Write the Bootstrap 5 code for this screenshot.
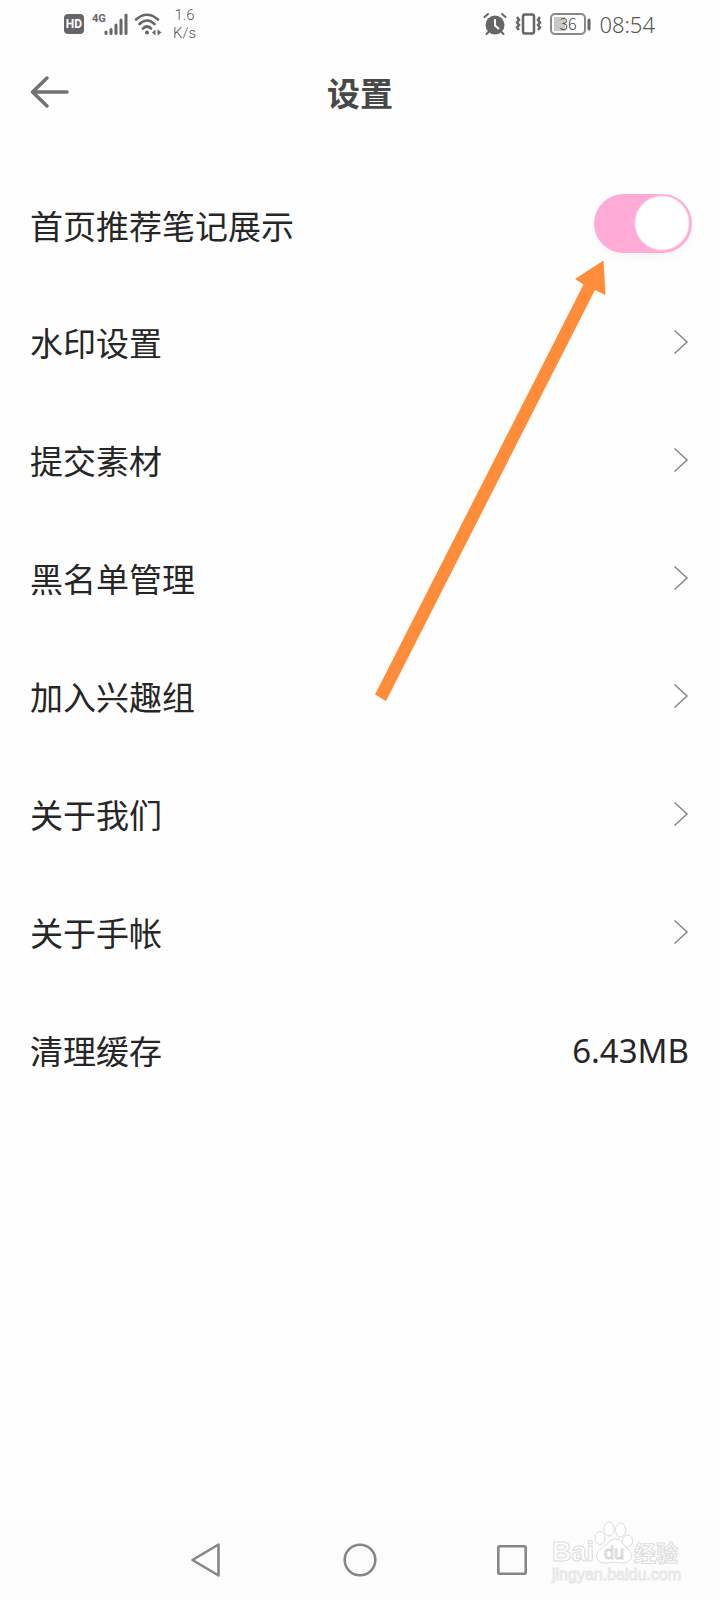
<!DOCTYPE html>
<html lang="zh-CN">
<head>
<meta charset="utf-8">
<meta name="viewport" content="width=device-width, initial-scale=1">
<title>设置</title>
<link rel="stylesheet" href="https://cdn.jsdelivr.net/npm/bootstrap@5.3.0/dist/css/bootstrap.min.css">
<style>
  body { font-family: "Noto Sans", "Noto Sans CJK SC", sans-serif; color: #262626; background: #fefefe; }
  .status-bar { height: 48px; padding: 0 65px 0 64px; color: #6a6a6a; }
  .net-speed { font: 300 15px/18px Roboto, "Noto Sans CJK SC", sans-serif; margin-left: 7px; color: #555; }
  .clock { font: 300 22px/30px "Noto Sans", "Noto Sans CJK SC", sans-serif; color: #555; }
  .title-bar { height: 88px; padding: 0 30px; margin-bottom: 28px; }
  .title-bar h1 { font: 700 33px/48px "Noto Sans CJK SC", sans-serif; color: #484848; }
  .side { width: 40px; }
  .setting-row { height: 118px; padding: 1px 31px 0 30px; font-family: "Noto Sans CJK SC", sans-serif; font-size: 33px; line-height: 48px; color: #262626; }
  .setting-row.with-switch { padding: 0 28px 0 30px; }
  .size-value { font-family: "Noto Sans", "Noto Sans CJK SC", sans-serif; padding-top: 2px; }
  .pink-switch { appearance: none; width: 98px; height: 59px; border-radius: 30px; background: radial-gradient(circle at 68px 29px, #fff 26px, #ffabd5 28px); box-shadow: 0 6px 12px -4px rgba(0,0,0,.06); }
  .pink-switch:not(:checked) { background: radial-gradient(circle at 30px 29px, #fff 26px, #ddd 28px); }
  .pointer-arrow { top: 96px; right: 112px; pointer-events: none; }
  .nav-keys { height: 80px; gap: 104px; background: #fcfcfc; }
  .nav-keys .btn { width: 48px; height: 48px; }
  .watermark { right: 32px; top: 0; pointer-events: none; }
</style>
</head>
<body class="d-flex flex-column min-vh-100">
<header>
  <div class="status-bar d-flex align-items-center justify-content-between">
    <div class="d-flex align-items-center">
      <svg class="me-2" width="20" height="22" viewBox="0 0 20 22" role="img" aria-label="HD"><rect y="1" width="20" height="20" rx="4" fill="#666"/><text x="10" y="15" text-anchor="middle" font-family="Roboto, sans-serif" font-weight="700" font-size="12" fill="#fff">HD</text></svg>
      <svg class="me-1" width="38" height="24" viewBox="0 0 38 24" aria-label="4G"><text x="0" y="10" font-family="Roboto, sans-serif" font-weight="700" font-size="11" fill="#666">4G</text><path d="M14 21.500V20M19 21.500V17.500M24 21.500V13M29 21.500V8M34 21.500V3" stroke="#666" stroke-width="3" stroke-linecap="round"/></svg>
      <svg width="32" height="24" viewBox="0 0 32 24" fill="none" stroke="#666" stroke-width="2.600" stroke-linecap="round" aria-label="Wi-Fi"><path d="M2 7.500Q13-2 24 7.500M5.500 12Q13 5 20.500 12M9 16.500Q13 12.500 17 16.500"/><circle cx="13" cy="20.500" r="2" fill="#666" stroke="none"/><path d="M21.500 17.500V23.500L18 20.500ZM23.500 17.500V23.500L27.500 20.500Z" fill="#666" stroke="none"/></svg>
      <div class="net-speed text-center"><div>1.6</div><div>K/s</div></div>
    </div>
    <div class="d-flex align-items-center gap-2">
      <svg width="24" height="24" viewBox="0 0 24 24" aria-label="闹钟"><circle cx="12" cy="13" r="9.500" fill="#666"/><path d="M1.500 5L5 2M19 2L22.500 5M5.500 20L3.500 22M18.500 20L20.500 22" stroke="#666" stroke-width="2" stroke-linecap="round"/><path d="M12 7V13.500L16 17" fill="none" stroke="#fff" stroke-width="2"/></svg>
      <svg width="27" height="24" viewBox="0 0 27 24" fill="none" stroke="#666" aria-label="振动"><rect x="8" y="2.500" width="11" height="19" rx="2" stroke-width="2.500"/><path d="M2 5L4 8L2 10.500L4 13L2 15.500L4 18M25 5L23 8L25 10.500L23 13L25 15.500L23 18" stroke-width="2.500"/></svg>
      <svg width="41" height="24" viewBox="0 0 41 24" aria-label="电量 36%"><rect x="1" y="2" width="34" height="20" rx="4" fill="none" stroke="#888" stroke-width="2"/><rect x="4" y="5" width="11" height="14" fill="#c9c9c9"/><path d="M39 8V17" stroke="#666" stroke-width="3" stroke-linecap="round"/><text x="18" y="18" text-anchor="middle" font-family="Noto Sans CJK SC, sans-serif" font-weight="300" font-size="16" fill="#444">36</text></svg>
      <span class="clock">08:54</span>
    </div>
  </div>
  <div class="title-bar d-flex align-items-center justify-content-between">
    <button type="button" class="btn p-0 border-0 side lh-1" aria-label="返回"><svg width="40" height="34" viewBox="0 0 40 34" fill="none" stroke="#727272" stroke-width="3.500" stroke-linecap="round" stroke-linejoin="round"><path d="M17 3L2.500 17L17 31M3 17H37"/></svg></button>
    <h1 class="m-0">设置</h1>
    <span class="side"></span>
  </div>
</header>
<main class="position-relative flex-grow-1">
  <svg class="d-none"><symbol id="chevron" viewBox="0 0 16 26"><path d="M1.500 1.500L14 13L1.500 24.500" fill="none" stroke="#8a8a8a" stroke-width="1.600"/></symbol></svg>
  <div class="setting-row with-switch d-flex align-items-center justify-content-between">
    <label class="pt-1" for="recommend">首页推荐笔记展示</label>
    <input class="pink-switch m-0" type="checkbox" role="switch" id="recommend" checked>
  </div>
  <a href="#" class="setting-row d-flex align-items-center justify-content-between text-decoration-none">水印设置<svg width="16" height="26" aria-hidden="true"><use href="#chevron"/></svg></a>
  <a href="#" class="setting-row d-flex align-items-center justify-content-between text-decoration-none">提交素材<svg width="16" height="26" aria-hidden="true"><use href="#chevron"/></svg></a>
  <a href="#" class="setting-row d-flex align-items-center justify-content-between text-decoration-none">黑名单管理<svg width="16" height="26" aria-hidden="true"><use href="#chevron"/></svg></a>
  <a href="#" class="setting-row d-flex align-items-center justify-content-between text-decoration-none">加入兴趣组<svg width="16" height="26" aria-hidden="true"><use href="#chevron"/></svg></a>
  <a href="#" class="setting-row d-flex align-items-center justify-content-between text-decoration-none">关于我们<svg width="16" height="26" aria-hidden="true"><use href="#chevron"/></svg></a>
  <a href="#" class="setting-row d-flex align-items-center justify-content-between text-decoration-none">关于手帐<svg width="16" height="26" aria-hidden="true"><use href="#chevron"/></svg></a>
  <a href="#" class="setting-row d-flex align-items-center justify-content-between text-decoration-none">清理缓存<span class="size-value">6.43MB</span></a>
  <svg class="pointer-arrow position-absolute" width="234" height="444" viewBox="374 260 234 444" aria-hidden="true"><path d="M603.500 260.500L575 279L583.500 284.500L375 694.500L386 701L595 290L605.500 295Z" fill="#ff8c38"/></svg>
</main>
<footer class="nav-keys position-relative d-flex align-items-center justify-content-center">
  <button type="button" class="btn p-0 border-0 lh-1" aria-label="后退"><svg width="48" height="48" viewBox="0 0 48 48" fill="none" stroke="#868686" stroke-width="2.600" stroke-linejoin="round"><path d="M34.500 8.500V39.500L8.500 24Z"/></svg></button>
  <button type="button" class="btn p-0 border-0 lh-1" aria-label="主页"><svg width="48" height="48" viewBox="0 0 48 48" fill="none" stroke="#868686" stroke-width="2.600"><circle cx="24" cy="24" r="15.300"/></svg></button>
  <button type="button" class="btn p-0 border-0 lh-1" aria-label="最近任务"><svg width="48" height="48" viewBox="0 0 48 48" fill="none" stroke="#868686" stroke-width="2.600"><rect x="10.300" y="10.300" width="27.400" height="27.400" rx="1.500"/></svg></button>
  <svg class="watermark position-absolute" width="140" height="68" viewBox="0 0 140 68" fill="#fff" stroke="#dcdcdc" stroke-width="1">
    <g font-family="Liberation Sans, Noto Sans CJK SC, sans-serif" font-weight="700">
      <text x="4" y="41" font-size="27">Bai</text>
      <path d="M67 19C74 19 76 26 81 30C87 36 82 43 75 43C70 43 66 41 61 43C52 44 47 40 49 34C52 27 59 26 62 21C63 20 65 19 67 19Z"/>
      <ellipse cx="52" cy="18" rx="5" ry="6.500"/><ellipse cx="61" cy="9" rx="5" ry="7"/><ellipse cx="72.500" cy="10" rx="5" ry="7"/><ellipse cx="79.500" cy="21" rx="5" ry="6"/>
      <text x="66" y="39" font-size="18" font-weight="400" text-anchor="middle" stroke="#d4d4d4">du</text>
      <text x="86" y="41" font-size="22" font-family="Noto Sans CJK SC, sans-serif">经验</text>
    </g>
    <text x="4" y="60" font-size="16" font-family="Liberation Sans, sans-serif" stroke="#e6e6e6">jingyan.baidu.com</text>
  </svg>
</footer>
<script src="https://cdn.jsdelivr.net/npm/bootstrap@5.3.0/dist/js/bootstrap.bundle.min.js"></script>
</body>
</html>
